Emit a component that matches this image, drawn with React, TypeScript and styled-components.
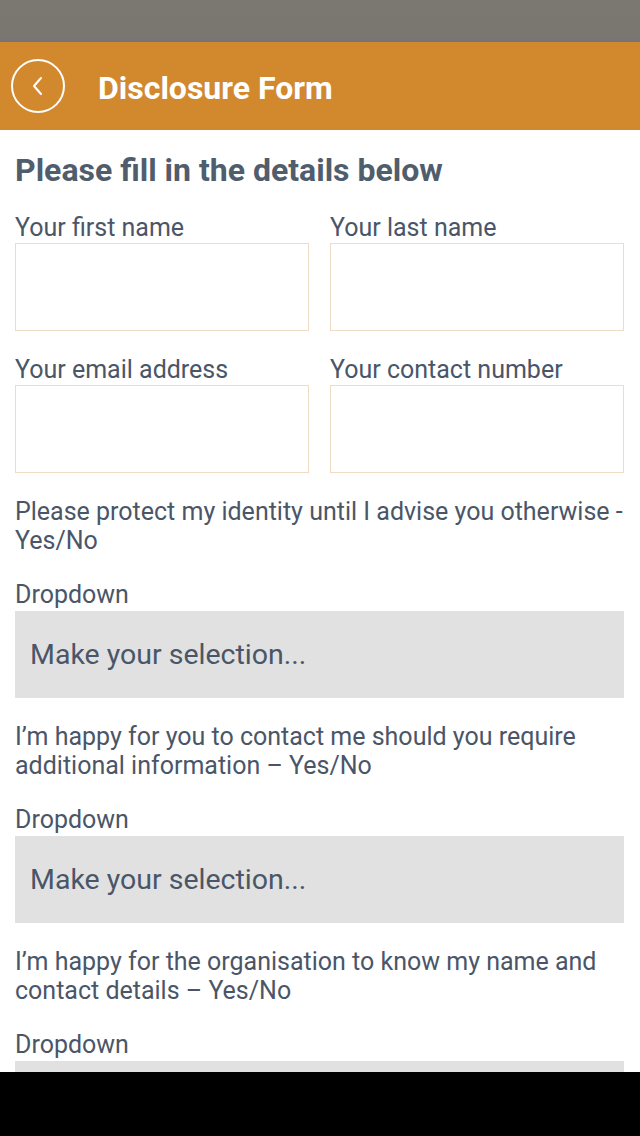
import React from 'react';
import styled, { createGlobalStyle } from 'styled-components';

const GlobalStyle = createGlobalStyle`
  html, body {
    margin: 0;
    padding: 0;
    background: #ffffff;
  }
  body {
    font-family: Roboto, 'Noto Sans', 'Liberation Sans', sans-serif;
  }
  * {
    box-sizing: border-box;
  }
`;

const Screen = styled.div`
  width: 640px;
  height: 1136px;
  display: flex;
  flex-direction: column;
  overflow: hidden;
  background: #ffffff;
`;

const StatusBar = styled.div`
  height: 42px;
  flex-shrink: 0;
  background: linear-gradient(#7b7872 0, #7a7771 36px, #747377 42px);
`;

const Header = styled.header`
  height: 88px;
  flex-shrink: 0;
  display: flex;
  align-items: center;
  padding-left: 11px;
  gap: 33px;
  background: #d2892e;
`;

const BackButton = styled.button`
  width: 54px;
  height: 54px;
  padding: 0;
  border: 2px solid #ffffff;
  border-radius: 50%;
  background: transparent;
  display: flex;
  align-items: center;
  justify-content: center;
`;

const Title = styled.h1`
  margin: 3px 0 0;
  color: #ffffff;
  font-size: 32px;
  font-weight: 700;
`;

const Content = styled.main`
  flex: 1;
  overflow: hidden;
  padding: 22px 16px 0 15px;
`;

const Heading = styled.h2`
  margin: 0 0 26px;
  color: #505d6c;
  font-size: 32px;
  line-height: 36px;
  font-weight: 700;
`;

const FieldGrid = styled.div`
  display: grid;
  grid-template-columns: 1fr 1fr;
  column-gap: 21px;
  row-gap: 25px;
`;

const Field = styled.div`
  display: flex;
  flex-direction: column;
  gap: 1px;
`;

const Label = styled.label`
  color: #4a5668;
  font-size: 25px;
  line-height: 28px;
  white-space: nowrap;
`;

const TextBox = styled.input`
  height: 88px;
  width: 100%;
  border: 1px solid #eedcc4;
  background: #ffffff;
  font: inherit;
  outline: none;
`;

const Question = styled.p`
  margin: 24px 0 26px;
  color: #4a5668;
  font-size: 25px;
  line-height: 29px;
`;

const DropdownGroup = styled.div`
  display: flex;
  flex-direction: column;
  gap: 2px;
`;

const Select = styled.div`
  height: 87px;
  display: flex;
  align-items: center;
  padding-left: 15px;
  background: #e1e1e1;
  color: #4a5668;
  font-size: 28.5px;
`;

const NavBar = styled.div`
  height: 64px;
  flex-shrink: 0;
  background: #000000;
`;

const questions = [
  'Please protect my identity until I advise you otherwise - Yes/No',
  'I\u2019m happy for you to contact me should you require additional information \u2013 Yes/No',
  'I\u2019m happy for the organisation to know my name and contact details \u2013 Yes/No',
];

const fields = ['Your first name', 'Your last name', 'Your email address', 'Your contact number'];

export default function App() {
  return (
    <>
      <GlobalStyle />
      <Screen>
        <StatusBar />
        <Header>
          <BackButton aria-label="Back">
            <svg width="14" height="20" viewBox="0 0 14 20">
              <path d="M10 2 L3 10 L10 18" fill="none" stroke="#ffffff" strokeWidth="2" strokeLinecap="round" strokeLinejoin="round" />
            </svg>
          </BackButton>
          <Title>Disclosure Form</Title>
        </Header>
        <Content>
          <Heading>Please fill in the details below</Heading>
          <FieldGrid>
            {fields.map((f) => (
              <Field key={f}>
                <Label>{f}</Label>
                <TextBox />
              </Field>
            ))}
          </FieldGrid>
          {questions.map((q) => (
            <div key={q}>
              <Question>{q}</Question>
              <DropdownGroup>
                <Label>Dropdown</Label>
                <Select>Make your selection...</Select>
              </DropdownGroup>
            </div>
          ))}
        </Content>
        <NavBar />
      </Screen>
    </>
  );
}
